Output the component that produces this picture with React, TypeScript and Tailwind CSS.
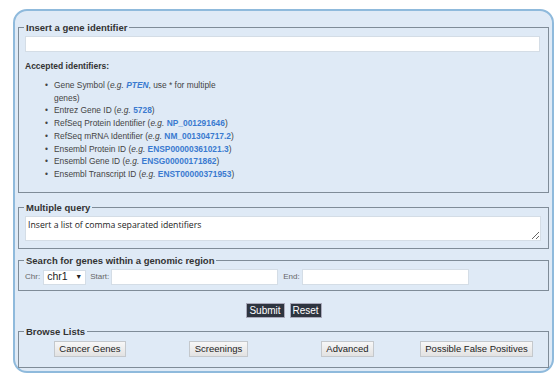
import React from "react";

const ids: { label: string; example: string; italic?: boolean; rest?: string }[] = [
  { label: "Gene Symbol", example: "PTEN", italic: true, rest: ", use * for multiple genes)" },
  { label: "Entrez Gene ID", example: "5728" },
  { label: "RefSeq Protein Identifier", example: "NP_001291646" },
  { label: "RefSeq mRNA Identifier", example: "NM_001304717.2" },
  { label: "Ensembl Protein ID", example: "ENSP00000361021.3" },
  { label: "Ensembl Gene ID", example: "ENSG00000171862" },
  { label: "Ensembl Transcript ID", example: "ENST00000371953" },
];

function Box({ title, className, children }: { title: string; className?: string; children: React.ReactNode }) {
  return (
    <fieldset className={`border border-[#7f8c98] px-[6px] ${className ?? ""}`}>
      <legend className="ml-[-1px] px-[2px] text-[9.5px] font-bold leading-[13px] text-[#333]">{title}</legend>
      {children}
    </fieldset>
  );
}

function GreyButton({ w, children }: { w: string; children: React.ReactNode }) {
  return (
    <button className={`${w} h-[16px] border border-[#c4c8cc] bg-gradient-to-b from-[#f7f7f7] to-[#e2e2e2] text-[9.5px] leading-[14px] text-[#222]`}>
      {children}
    </button>
  );
}

export default function App() {
  return (
    <div className="h-[377px] w-[558px] bg-white pl-[13px] pt-[9px] font-['Liberation_Sans',Arial,sans-serif]">
      <div className="h-[364px] w-[541px] rounded-[14px] border-2 border-[#8fbadc] bg-[#dfeaf6] px-[3px] pt-[10px]">
        <Box title="Insert a gene identifier" className="h-[172px]">
          <input className="mt-[2px] block h-[16px] w-[515px] border border-[#d4dde6] bg-white" />
          <p className="mt-[8px] text-[8.5px] font-bold leading-[12px] text-[#333]">Accepted identifiers:</p>
          <ul className="mt-[7px] w-[216px] pl-[29px] text-[8.4px] leading-[12.7px] text-[#444]">
            {ids.map((it) => (
              <li key={it.label} className="relative">
                <span className="absolute left-[-9px] top-0">•</span>
                {it.label} (<i>e.g.</i>{" "}
                <span className={`font-bold text-[#3a7ad0] ${it.italic ? "italic" : ""}`}>{it.example}</span>
                {it.rest ?? ")"}
              </li>
            ))}
          </ul>
        </Box>

        <Box title="Multiple query" className="mt-[8px] h-[48px]">
          <textarea
            className="mt-[2px] block h-[25px] w-[516px] resize-y border border-[#d4dde6] bg-white px-[2px] pt-[1px] font-['Open_Sans',sans-serif] text-[8.7px] leading-[14px] text-[#222] placeholder:text-[#222]"
            placeholder="Insert a list of comma separated identifiers"
          />
        </Box>

        <Box title="Search for genes within a genomic region" className="mt-[5px] h-[37px]">
          <div className="mt-[2px] flex items-center text-[8px] text-[#666]">
            <span>Chr:</span>
            <span className="ml-[3px] flex h-[15px] w-[43px] items-center justify-between border border-[#d4dde6] bg-white px-[3px] text-[10.5px] text-[#222]">
              chr1 <span className="text-[7px]">▼</span>
            </span>
            <span className="ml-[4px]">Start:</span>
            <input className="ml-[2px] h-[16px] w-[167px] border border-[#d4dde6] bg-white" />
            <span className="ml-[5px]">End:</span>
            <input className="ml-[2px] h-[16px] w-[167px] border border-[#d4dde6] bg-white" />
          </div>
        </Box>

        <div className="mt-[12px] flex justify-center gap-[5px]">
          <button className="h-[15px] w-[39px] border border-[#aab] bg-[#2e3540] text-[10px] leading-[13px] text-white">Submit</button>
          <button className="h-[15px] w-[32px] border border-[#aab] bg-[#2e3540] text-[10px] leading-[13px] text-white">Reset</button>
        </div>

        <Box title="Browse Lists" className="mt-[7px] h-[43px]">
          <div className="mt-[3px] flex">
            <span className="w-[29px]" />
            <GreyButton w="w-[72px]">Cancer Genes</GreyButton>
            <span className="w-[63px]" />
            <GreyButton w="w-[59px]">Screenings</GreyButton>
            <span className="w-[73px]" />
            <GreyButton w="w-[53px]">Advanced</GreyButton>
            <span className="w-[46px]" />
            <GreyButton w="w-[113px]">Possible False Positives</GreyButton>
          </div>
        </Box>
      </div>
    </div>
  );
}
